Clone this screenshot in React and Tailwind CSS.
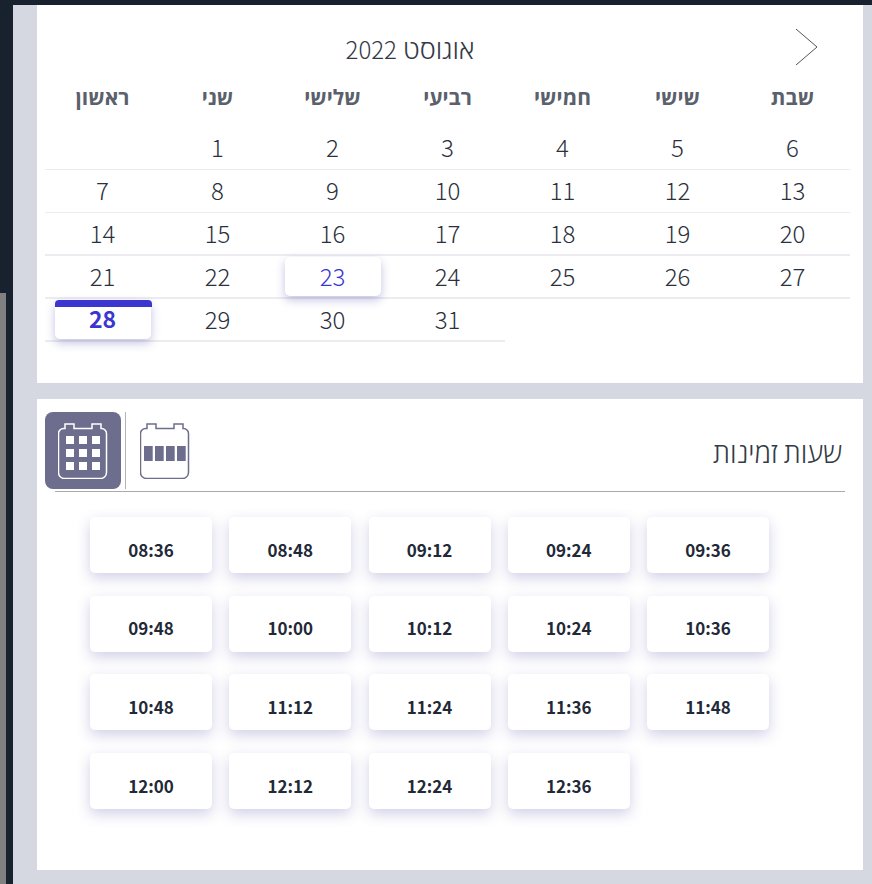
const rows = [
  ["", "1", "2", "3", "4", "5", "6"],
  ["7", "8", "9", "10", "11", "12", "13"],
  ["14", "15", "16", "17", "18", "19", "20"],
  ["21", "22", "23", "24", "25", "26", "27"],
  ["28", "29", "30", "31"],
];

const dayNames = ["ראשון", "שני", "שלישי", "רביעי", "חמישי", "שישי", "שבת"];

const times = [
  "08:36", "08:48", "09:12", "09:24", "09:36",
  "09:48", "10:00", "10:12", "10:24", "10:36",
  "10:48", "11:12", "11:24", "11:36", "11:48",
  "12:00", "12:12", "12:24", "12:36",
];

const bodyPath =
  "M7 1.500h35M7 5.500h0.500V1h9v4.500h18V1h9v4.500h0.500a5 5 0 0 1 5 5v39a6 6 0 0 1-6 6H7a6 6 0 0 1-6-6v-39a5 5 0 0 1 5-5z";

const MonthIcon = () => (
  <svg width="50" height="56" viewBox="0 0 50 56" fill="none">
    <path d={bodyPath.slice(11)} stroke="#ffffff" strokeWidth="1.500" transform="translate(-0.500 0)" />
    {[13, 26, 39].map((y) =>
      [8, 21, 34].map((x) => <rect key={`${x}-${y}`} x={x} y={y} width="8" height="8" fill="#ffffff" />)
    )}
  </svg>
);

const WeekIcon = () => (
  <svg width="50" height="56" viewBox="0 0 50 56" fill="none">
    <path d={bodyPath.slice(11)} stroke="#6d6d8e" strokeWidth="1.500" transform="translate(-0.500 0)" />
    {[4, 15, 26, 37].map((x) => (
      <rect key={x} x={x} y="23" width="8.700" height="15" fill="#6d6d8e" />
    ))}
  </svg>
);

const DayCell = ({ day }) => {
  if (day === "23") {
    return (
      <div className="flex h-full items-center justify-center">
        <div className="flex h-[39px] w-[96px] items-center justify-center rounded-[5px] bg-white pb-[2px] text-[#3a36cf] shadow-[0_4px_10px_rgba(60,56,160,0.3)]">
          {day}
        </div>
      </div>
    );
  }
  if (day === "28") {
    return (
      <div className="flex h-full items-center justify-center">
        <div className="relative flex h-[39px] w-[96px] items-center justify-center rounded-[5px] bg-white pb-[2px] text-[23px] font-bold text-[#3a36cf] shadow-[0_4px_10px_rgba(60,56,160,0.3)]">
          <div className="absolute left-0 top-0 h-[7px] w-[97px] rounded-t-[4px] bg-[#3a36cf]"></div>
          {day}
        </div>
      </div>
    );
  }
  return <div className="flex h-full items-center justify-center pb-[2px]">{day}</div>;
};

export default function App() {
  return (
    <div className="flex h-[884px] w-[872px] flex-col overflow-hidden bg-[#d5d8e1] font-['Noto_Sans_CJK_JP','Open_Sans',sans-serif] text-[#2a303c]">
      <div className="h-[5px] bg-[#18222f]"></div>
      <div className="flex flex-1">
        <div className="flex w-[13px] flex-col bg-[#18222f]">
          <div className="h-[288px]"></div>
          <div className="w-[6px] flex-1 bg-[#808080]"></div>
        </div>
        <div className="flex flex-1 flex-col gap-[16px] pl-[24px] pr-[9px]">
          <section className="h-[378px] bg-white px-[8px]">
            <div className="relative flex h-[77px] items-center justify-center pr-[80px] pt-[8px]">
              <span dir="rtl" className="text-[27px] font-light leading-none text-[#333a46]">
                אוגוסט <span className="text-[24px]">2022</span>
              </span>
              <svg className="absolute left-[750px] top-[23px]" width="24" height="38" viewBox="0 0 24 38" fill="none">
                <path d="M1 1l21 18L1 37" stroke="#555" strokeWidth="1" />
              </svg>
            </div>
            <div className="grid w-[805px] grid-cols-7">
              {dayNames.map((name) => (
                <div key={name} dir="rtl" className="h-[45px] text-center text-[21px] font-bold leading-[28px] text-[#5a606c]">
                  {name}
                </div>
              ))}
            </div>
            <div className="w-[805px]">
              {rows.map((row, i) => (
                <div
                  key={i}
                  className={`grid h-[43px] text-[24px] font-light ${
                    i === 4 ? "w-[460px] grid-cols-[repeat(4,115px)]" : "grid-cols-7"
                  } ${i < 2 ? "border-b border-[#ececf0]" : "border-b-2 border-[#ececf0]"}`}
                >
                  {row.map((day, j) => (
                    <DayCell key={j} day={day} />
                  ))}
                </div>
              ))}
            </div>
          </section>

          <section className="h-[471px] bg-white px-[8px] pt-[13px]">
            <div className="flex h-[77px]">
              <button className="flex h-[77px] w-[76px] items-center justify-center rounded-[8px] bg-[#6d6d8e]">
                <MonthIcon />
              </button>
              <div className="ml-[4px] h-[77px] w-px bg-[#b4b4b4]"></div>
              <div className="ml-[14px] flex items-center">
                <WeekIcon />
              </div>
              <div dir="rtl" className="ml-auto mr-[13px] flex items-center pt-[3px] text-[27.500px] font-light text-[#333a46]">
                שעות זמינות
              </div>
            </div>
            <div className="mx-[10px] mt-[2px] h-px bg-[#aaaaaa]"></div>
            <div className="ml-[45px] mt-[25px] grid grid-cols-[repeat(5,122px)] gap-x-[17.250px] gap-y-[22.670px]">
              {times.map((time) => (
                <button
                  key={time}
                  className="h-[56px] rounded-[5px] bg-white pt-[9px] text-[17px] font-bold text-[#1f2937] shadow-[0_5px_14px_rgba(70,66,160,0.25)]"
                >
                  {time}
                </button>
              ))}
            </div>
          </section>
        </div>
      </div>
    </div>
  );
}
